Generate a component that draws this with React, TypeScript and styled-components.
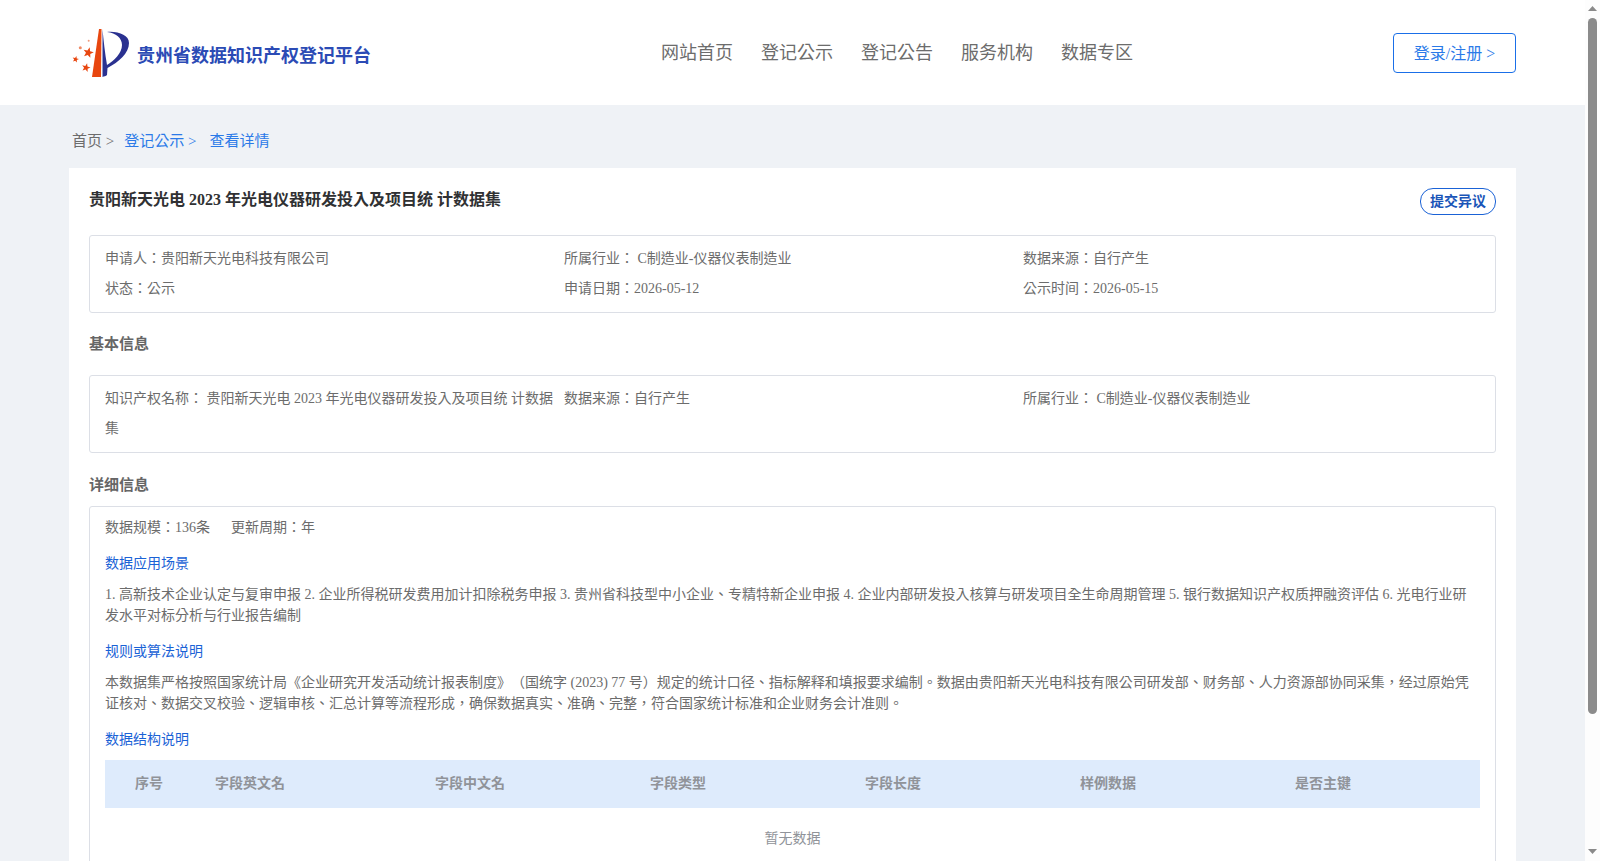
import styled, { createGlobalStyle } from "styled-components";

const GlobalStyle = createGlobalStyle`
html, body {
    margin: 0;
    padding: 0;
    font-family: "Liberation Serif", "Noto Sans CJK TC", serif;
    color: #6c6c6c;
    text-spacing-trim: space-all;
}
* {
    box-sizing: border-box;
}
`

const Shell = styled.div`
display: flex;
height: 100vh;
overflow: hidden;
`

const Page = styled.div`
flex: 1;
min-width: 0;
overflow-y: auto;
background-color: #eff2f6;
`

const Rail = styled.aside`
width: 15px;
flex-shrink: 0;
display: flex;
flex-direction: column;
padding: 6px 3px 7px;
background-color: #fdfdfd;
`

const RailThumb = styled.div`
height: 696px;
margin-top: 7px;
margin-bottom: auto;
border-radius: 5px;
background-color: #8b8b8b;
`

const Header = styled.header`
height: 105px;
background-color: white;
padding: 0 69px;
display: flex;
align-items: center;
justify-content: space-between;
`

const Brand = styled.div`
display: flex;
align-items: center;
width: 592px;
padding-left: 3px;
`

const BrandName = styled.span`
font-size: 18px;
font-weight: bold;
color: #2b4bb5;
margin-left: 7px;
margin-top: 3px;
`

const Nav = styled.nav`
display: flex;
gap: 28px;
font-size: 18px;
color: #6c6c6c;
margin-right: auto;
margin-top: -4px;
`

const LoginButton = styled.button`
width: 123px;
height: 40px;
padding: 0 0 2px;
border: 1px solid #1a6fe8;
border-radius: 4px;
background: white;
color: #2b7ae8;
font-family: inherit;
font-size: 16px;
`

const Main = styled.main`
padding: 0 69px 20px;
`

const Crumbs = styled.div`
height: 63px;
display: flex;
align-items: center;
padding-left: 3px;
padding-top: 6px;
font-size: 15px;
color: #6c6c6c;
`

const CrumbLink = styled.a`
color: #2b7ae8;
margin-left: 10px;
& + & {
    margin-left: 13px;
}
`

const Card = styled.section`
background-color: white;
padding: 20px;
`

const TitleRow = styled.div`
display: flex;
justify-content: space-between;
align-items: flex-start;
height: 47px;
`

const Title = styled.h1`
margin: 0;
font-size: 16px;
line-height: 24px;
color: #303133;
`

const ObjectionButton = styled.button`
height: 27px;
padding: 0 9px 3px;
border: 1px solid #1a62d6;
border-radius: 13px;
background: white;
color: #1a55b8;
font-family: inherit;
font-size: 14px;
font-weight: bold;
`

const InfoBox = styled.div`
display: grid;
grid-template-columns: repeat(3, 1fr);
padding: 8px 13px 8px 15px;
border: 1px solid #dcdfe6;
border-radius: 3px;
font-size: 14px;
line-height: 30px;
`

const InfoItem = styled.div`
padding-right: 8px;
`

const SectionTitle = styled.h2<{ $tight?: boolean }>`
margin: 0;
font-size: 15px;
line-height: 22px;
color: #666;
padding-top: ${(props) => (props.$tight ? "21px" : "20px")};
padding-bottom: ${(props) => (props.$tight ? "10px" : "20px")};
`

const DetailBox = styled.div`
padding: 10px 15px 0;
border: 1px solid #dcdfe6;
border-radius: 3px;
font-size: 14px;
`

const Stats = styled.div`
display: flex;
gap: 21px;
line-height: 21px;
`

const SubTitle = styled.div`
color: #1a62d6;
line-height: 21px;
margin-top: 15px;
`

const Para = styled.p`
margin: 10px 0 0;
line-height: 21px;
`

const FieldHead = styled.div`
display: grid;
grid-template-columns: 80px 220px repeat(5, 215px);
align-items: center;
height: 48px;
margin-top: 10px;
padding-bottom: 5px;
background-color: #deebfc;
font-weight: bold;
color: #909399;
`

const FieldCell = styled.div`
padding-left: 30px;
`

const EmptyRow = styled.div`
height: 180px;
padding-top: 20px;
text-align: center;
line-height: 21px;
color: #909399;
`

// 五角星 points, r = outer radius
function starPoints(cx: number, cy: number, r: number) {
    const pts: string[] = [];
    for (let i = 0; i < 10; i++) {
        const radius = i % 2 === 0 ? r : r * 0.42;
        const angle = -Math.PI / 2 + 0.25 + (i * Math.PI) / 5;
        pts.push(`${(cx + radius * Math.cos(angle)).toFixed(2)},${(cy + radius * Math.sin(angle)).toFixed(2)}`);
    }
    return pts.join(" ");
}

const Logo = () => (
    <svg width="58" height="50" viewBox="0 0 58 50">
        <path d="M27 1 L29.500 1 L29 49 L20 49 Z" fill="#e8460f" />
        <path d="M30.500 1 L30.500 49 C32 48.500 34 48 35 47 L35.500 40 C47 34 57 25 57 15 C57 7 46 3 35 4 C44 5 50 10 50 17 C50 25 42 33 35 37 C33 26 31.500 12 30.500 1 Z" fill="#2a3190" />
        <polygon points={starPoints(16.3, 24.7, 5.5)} fill="#e8460f" />
        <polygon points={starPoints(3.6, 31.3, 3.4)} fill="#e8460f" />
        <polygon points={starPoints(14, 39.7, 4.5)} fill="#e8460f" />
        <circle cx="8.300" cy="19.700" r="1.500" fill="#ef8a66" />
        <circle cx="16.700" cy="12.700" r="1" fill="#ef9a7c" />
    </svg>
)

const navItems = ["网站首页", "登记公示", "登记公告", "服务机构", "数据专区"];
const fields = ["序号", "字段英文名", "字段中文名", "字段类型", "字段长度", "样例数据", "是否主键"];

function App() {
    return <Shell>
        <GlobalStyle />
        <Page>
            <Header>
                <Brand>
                    <Logo />
                    <BrandName>贵州省数据知识产权登记平台</BrandName>
                </Brand>
                <Nav>
                    {navItems.map(item => <span key={item}>{item}</span>)}
                </Nav>
                <LoginButton>登录/注册 &gt;</LoginButton>
            </Header>
            <Main>
                <Crumbs>
                    首页 &gt;
                    <CrumbLink>登记公示 &gt;</CrumbLink>
                    <CrumbLink>查看详情</CrumbLink>
                </Crumbs>
                <Card>
                    <TitleRow>
                        <Title>贵阳新天光电 2023 年光电仪器研发投入及项目统 计数据集</Title>
                        <ObjectionButton>提交异议</ObjectionButton>
                    </TitleRow>
                    <InfoBox>
                        <InfoItem>申请人：贵阳新天光电科技有限公司</InfoItem>
                        <InfoItem>所属行业： C制造业-仪器仪表制造业</InfoItem>
                        <InfoItem>数据来源：自行产生</InfoItem>
                        <InfoItem>状态：公示</InfoItem>
                        <InfoItem>申请日期：2026-05-12</InfoItem>
                        <InfoItem>公示时间：2026-05-15</InfoItem>
                    </InfoBox>
                    <SectionTitle>基本信息</SectionTitle>
                    <InfoBox>
                        <InfoItem>知识产权名称： 贵阳新天光电 2023 年光电仪器研发投入及项目统 计数据集</InfoItem>
                        <InfoItem>数据来源：自行产生</InfoItem>
                        <InfoItem>所属行业： C制造业-仪器仪表制造业</InfoItem>
                    </InfoBox>
                    <SectionTitle $tight>详细信息</SectionTitle>
                    <DetailBox>
                        <Stats>
                            <span>数据规模：136条</span>
                            <span>更新周期：年</span>
                        </Stats>
                        <SubTitle>数据应用场景</SubTitle>
                        <Para>1. 高新技术企业认定与复审申报 2. 企业所得税研发费用加计扣除税务申报 3. 贵州省科技型中小企业、专精特新企业申报 4. 企业内部研发投入核算与研发项目全生命周期管理 5. 银行数据知识产权质押融资评估 6. 光电行业研发水平对标分析与行业报告编制</Para>
                        <SubTitle>规则或算法说明</SubTitle>
                        <Para>本数据集严格按照国家统计局《企业研究开发活动统计报表制度》（国统字 (2023) 77 号）规定的统计口径、指标解释和填报要求编制。数据由贵阳新天光电科技有限公司研发部、财务部、人力资源部协同采集，经过原始凭证核对、数据交叉校验、逻辑审核、汇总计算等流程形成，确保数据真实、准确、完整，符合国家统计标准和企业财务会计准则。</Para>
                        <SubTitle>数据结构说明</SubTitle>
                        <FieldHead>
                            {fields.map(field => <FieldCell key={field}>{field}</FieldCell>)}
                        </FieldHead>
                        <EmptyRow>暂无数据</EmptyRow>
                    </DetailBox>
                </Card>
            </Main>
        </Page>
        <Rail>
            <svg width="9" height="5" viewBox="0 0 9 5"><path d="M4.500 0L9 5H0z" fill="#8a8a8a" /></svg>
            <RailThumb />
            <svg width="9" height="5" viewBox="0 0 9 5"><path d="M0 0H9L4.500 5z" fill="#8a8a8a" /></svg>
        </Rail>
    </Shell>
}

export default App;
